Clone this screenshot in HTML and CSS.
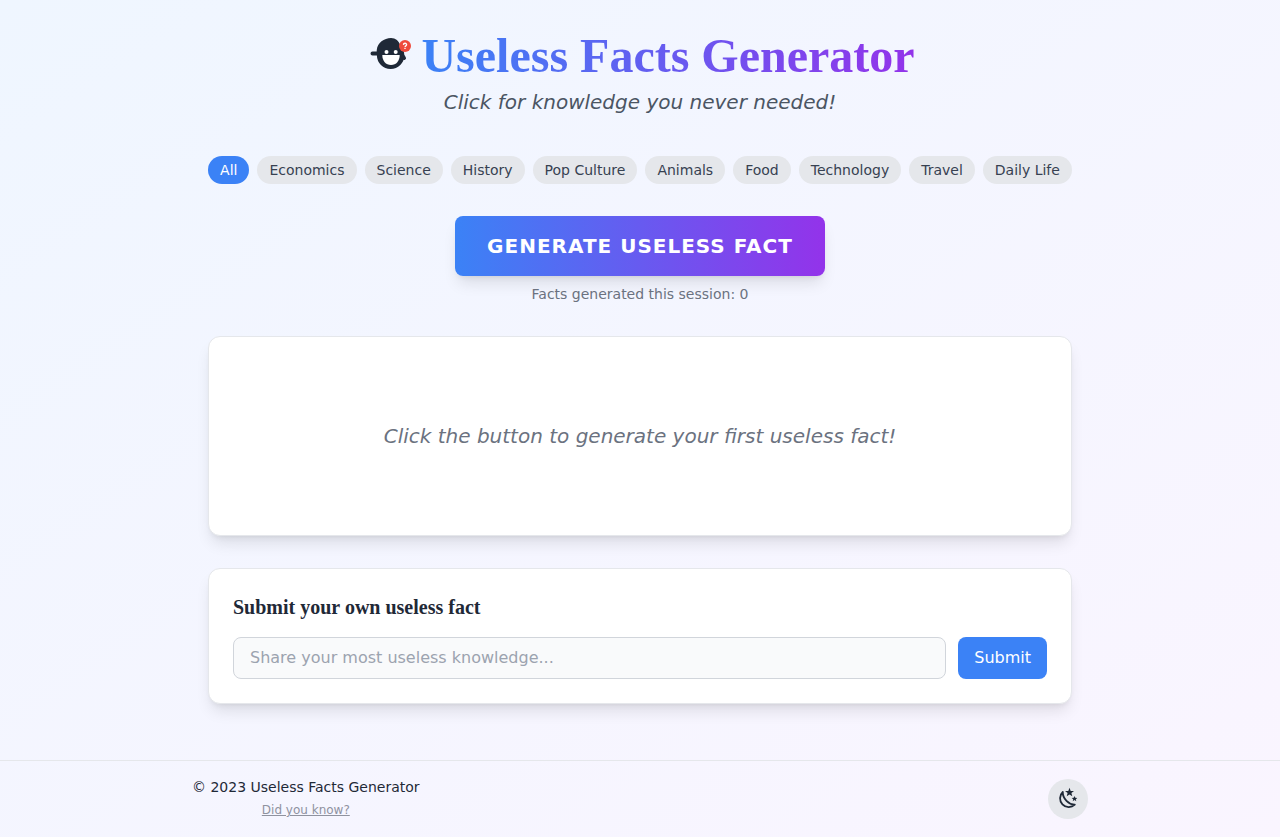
FILE: index.html
```html
<!DOCTYPE html>
<html lang="en">
<head>
<meta charset="utf-8">
<meta name="viewport" content="width=device-width, initial-scale=1">
<title>Useless Facts Generator</title>
<link rel="stylesheet" href="styles.css">
</head>
<body>
<div class="page">
  <main class="main">
    <header class="header">
      <div class="brand">
        <svg class="logo" viewBox="-1 0 48 48" aria-hidden="true">
          <path class="ink" d="M25 6c4.500 0 8.200 3 9.300 7.500 2.800 2.400 4 6 4 9.700a13.700 13.700 0 0 1-27.400 0c0-2-.4-4-.1-5.500C11.500 11 18 6 25 6Z"/>
          <path class="limb" d="M6.500 21.500H13M36 23l2 3"/>
          <circle class="face" cx="20.500" cy="19.900" r="2"/>
          <circle class="face" cx="29.700" cy="19.900" r="2"/>
          <path class="face" d="M16.300 23h17.400c0 6-3.500 10-8.700 10s-8.700-4-8.700-10Z"/>
          <circle class="badge" cx="39" cy="14" r="6"/>
          <path class="mark" d="M37.400 12.900c.1-2.300 3.300-2.100 3.200-.1 0 1.100-1.500 1.100-1.500 2.100M39 15.800v1.200"/>
        </svg>
        <h1 class="title">Useless Facts Generator</h1>
      </div>
      <p class="tagline">Click for knowledge you never needed!</p>
    </header>

    <nav class="categories" aria-label="Categories">
      <button class="chip chip-active" type="button">All</button>
      <button class="chip" type="button">Economics</button>
      <button class="chip" type="button">Science</button>
      <button class="chip" type="button">History</button>
      <button class="chip" type="button">Pop Culture</button>
      <button class="chip" type="button">Animals</button>
      <button class="chip" type="button">Food</button>
      <button class="chip" type="button">Technology</button>
      <button class="chip" type="button">Travel</button>
      <button class="chip" type="button">Daily Life</button>
    </nav>

    <section class="generator">
      <button class="generate" type="button">GENERATE USELESS FACT</button>
      <p class="counter">Facts generated this session: 0</p>
    </section>

    <section class="card fact">
      <p class="fact-text">Click the button to generate your first useless fact!</p>
    </section>

    <section class="card submission">
      <h2 class="card-title" id="submit-title">Submit your own useless fact</h2>
      <form class="form">
        <input class="field" type="text" placeholder="Share your most useless knowledge..." aria-labelledby="submit-title">
        <button class="submit" type="button">Submit</button>
      </form>
    </section>
  </main>

  <footer class="footer">
    <div class="footer-inner">
      <div class="credits">
        <p class="copyright">© 2023 Useless Facts Generator</p>
        <p class="more"><a class="more-link" href="#">Did you know?</a></p>
      </div>
      <button class="theme" type="button" aria-label="Switch to dark mode">
        <svg class="moon" viewBox="0 0 24 24" aria-hidden="true">
          <path class="crescent" d="M6.800 5A8.700 8.700 0 1 0 18.800 17.700C13 18 6.500 11.500 6.800 5Z"/>
          <path class="star" d="m13.500.800 1.200 3.100 3.300.1-2.600 2.100.9 3.200-2.800-1.800-2.800 1.800.9-3.200L9 4l3.300-.1ZM18.500 8.900l.8 1.900 2 .1-1.500 1.300.5 2-1.800-1.100-1.800 1.100.5-2-1.500-1.300 2-.1Z"/>
        </svg>
      </button>
    </div>
  </footer>
</div>
</body>
</html>
```
FILE: styles.css
```css
* {
  box-sizing: border-box;
}

body,
h1,
h2,
p {
  margin: 0;
}

body,
button,
input {
  font-family: "DejaVu Sans", sans-serif;
}

body {
  color: #1f2937;
  font-size: 16px;
  line-height: 24px;
}

button {
  border: 0;
  cursor: pointer;
}

.page {
  display: flex;
  flex-direction: column;
  min-height: 100vh;
  background: linear-gradient(to bottom right, #eff6ff, #faf5ff);
}

.main {
  flex: 1;
  width: 100%;
  max-width: 896px;
  margin: 0 auto;
  padding: 32px 16px;
}

.header {
  margin-bottom: 40px;
  text-align: center;
}

.brand {
  display: flex;
  align-items: center;
  justify-content: center;
  gap: 8px;
  margin-bottom: 8px;
}

.logo {
  flex: none;
  width: 48px;
  height: 48px;
}

.ink {
  fill: #1f2937;
}

.limb {
  fill: none;
  stroke: #1f2937;
  stroke-width: 4;
  stroke-linecap: round;
}

.face {
  fill: #fff;
}

.badge {
  fill: #ef4b3c;
}

.mark {
  fill: none;
  stroke: #fff;
  stroke-width: 1.3;
}

.title {
  font-family: "Liberation Serif", serif;
  font-size: 48px;
  line-height: 48px;
  font-weight: 700;
  color: transparent;
  background: linear-gradient(to right, #3b82f6, #9333ea);
  background-clip: text;
  -webkit-background-clip: text;
}

.tagline {
  color: #4b5563;
  font-size: 20px;
  line-height: 28px;
  font-style: italic;
}

.categories {
  display: flex;
  flex-wrap: wrap;
  justify-content: center;
  gap: 8px;
  margin-bottom: 32px;
}

.chip {
  padding: 4px 12px;
  border-radius: 14px;
  background: #e5e7eb;
  color: #374151;
  font-size: 14px;
  line-height: 20px;
}

.chip-active {
  background: #3b82f6;
  color: #fff;
}

.generator {
  margin-bottom: 32px;
  text-align: center;
}

.generate {
  padding: 16px 32px;
  border-radius: 8px;
  background: linear-gradient(to right, #3b82f6, #9333ea);
  box-shadow: 0 10px 15px -3px rgb(0 0 0 / 10%), 0 4px 6px -4px rgb(0 0 0 / 10%);
  color: #fff;
  font-size: 20px;
  line-height: 28px;
  font-weight: 700;
  letter-spacing: 1px;
  vertical-align: top;
}

.counter {
  margin-top: 8px;
  color: #6b7280;
  font-size: 14px;
  line-height: 20px;
}

.card {
  border: 1px solid #e5e7eb;
  border-radius: 12px;
  background: #fff;
  box-shadow: 0 10px 15px -3px rgb(0 0 0 / 10%), 0 4px 6px -4px rgb(0 0 0 / 10%);
}

.fact {
  display: flex;
  align-items: center;
  justify-content: center;
  min-height: 200px;
  margin-bottom: 32px;
  padding: 32px;
}

.fact-text {
  color: #6b7280;
  font-size: 20px;
  line-height: 28px;
  font-style: italic;
  text-align: center;
}

.submission {
  padding: 24px;
}

.card-title {
  margin-bottom: 16px;
  font-family: "Liberation Serif", serif;
  font-size: 20px;
  line-height: 28px;
  font-weight: 700;
}

.form {
  display: flex;
  gap: 12px;
}

.field {
  flex: 1;
  min-width: 0;
  padding: 8px 16px;
  border: 1px solid #d1d5db;
  border-radius: 8px;
  background: #f9fafb;
  color: #1f2937;
  font-size: 16px;
  line-height: 24px;
}

.field::placeholder {
  color: #9ca3af;
}

.submit {
  padding: 8px 16px;
  border-radius: 8px;
  background: #3b82f6;
  color: #fff;
  font-size: 16px;
  line-height: 24px;
}

.footer {
  padding: 16px;
  border-top: 1px solid #e5e7eb;
}

.footer-inner {
  display: flex;
  align-items: center;
  justify-content: space-between;
  max-width: 896px;
  margin: 0 auto;
}

.credits {
  text-align: center;
}

.copyright {
  font-size: 14px;
  line-height: 20px;
}

.more-link {
  color: #8f929f;
  font-size: 12px;
  line-height: 16px;
}

.theme {
  display: flex;
  padding: 8px;
  border-radius: 50%;
  background: #e5e7eb;
}

.moon {
  width: 24px;
  height: 24px;
}

.crescent {
  fill: none;
  stroke: #1f2937;
  stroke-width: 1.8;
  stroke-linejoin: round;
}

.star {
  fill: #1f2937;
}
```
